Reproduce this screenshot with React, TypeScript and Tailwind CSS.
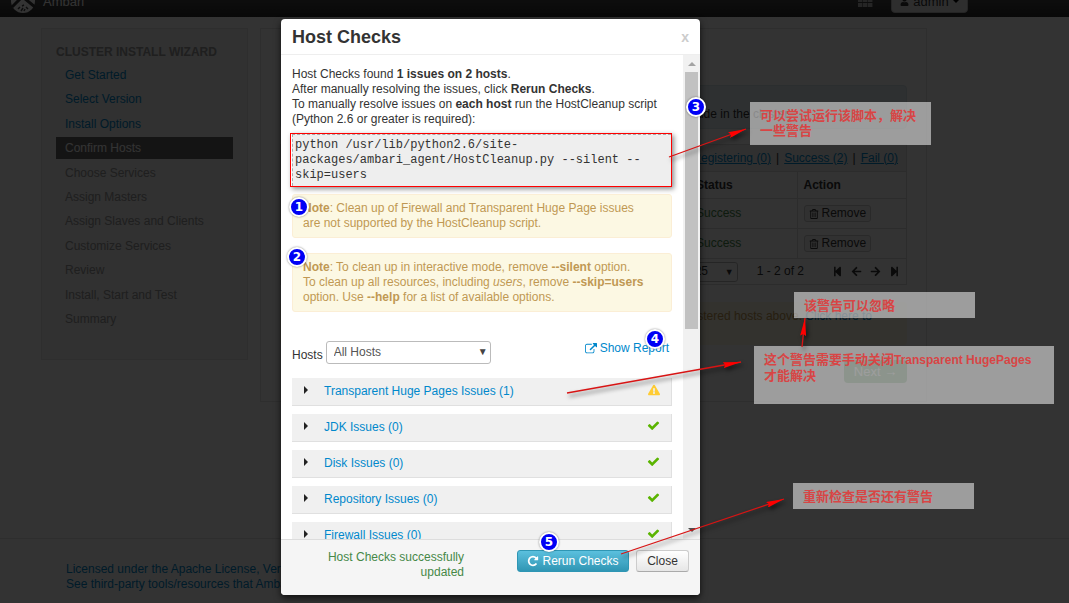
import React from "react";
import { FaArrowLeft, FaArrowRight, FaExclamationTriangle, FaRegTrashAlt, FaStepBackward, FaStepForward, FaUser } from "react-icons/fa";

const PATHS = {
  external:
    "M1408 928v320q0 119-84.5 203.5t-203.5 84.5h-832q-119 0-203.5-84.5t-84.5-203.5v-832q0-119 84.5-203.5t203.5-84.5h704q14 0 23 9t9 23v64q0 14-9 23t-23 9h-704q-66 0-113 47t-47 113v832q0 66 47 113t113 47h832q66 0 113-47t47-113v-320q0-14 9-23t23-9h64q14 0 23 9t9 23zm384-864v512q0 26-19 45t-45 19-45-19l-176-176-652 652q-10 10-23 10t-23-10l-114-114q-10-10-10-23t10-23l652-652-176-176q-19-19-19-45t19-45 45-19h512q26 0 45 19t19 45z",
  repeat:
    "M1664 256v448q0 26-19 45t-45 19h-448q-42 0-59-40-17-39 14-69l138-138q-148-137-349-137-104 0-198.5 40.5t-163.5 109.5-109.5 163.5-40.5 198.5 40.5 198.5 109.5 163.5 163.5 109.5 198.5 40.5q119 0 225-52t179-147q7-10 23-12 15 0 25 9l137 138q9 8 9.5 20.5t-7.5 22.5q-109 132-264 204.5t-327 72.5q-156 0-298-61t-245-164-164-245-61-298 61-298 164-245 245-164 298-61q147 0 284.5 55.5t244.5 156.5l130-129q29-31 70-14 39 17 39 59z",
  check:
    "M1671 566q0 40-28 68l-724 724-136 136q-28 28-68 28t-68-28l-136-136-362-362q-28-28-28-68t28-68l136-136q28-28 68-28t68 28l294 295 656-657q28-28 68-28t68 28l136 136q28 28 28 68z",
};

function Glyph({ name, className }: { name: keyof typeof PATHS; className: string }) {
  return (
    <svg viewBox="0 0 1792 1792" fill="currentColor" className={className} aria-hidden="true">
      <path d={PATHS[name]} />
    </svg>
  );
}

const steps = [
  { label: "Get Started", state: "done" },
  { label: "Select Version", state: "done" },
  { label: "Install Options", state: "done" },
  { label: "Confirm Hosts", state: "active" },
  { label: "Choose Services", state: "todo" },
  { label: "Assign Masters", state: "todo" },
  { label: "Assign Slaves and Clients", state: "todo" },
  { label: "Customize Services", state: "todo" },
  { label: "Review", state: "todo" },
  { label: "Install, Start and Test", state: "todo" },
  { label: "Summary", state: "todo" },
];

const stepStyle: Record<string, string> = {
  done: "text-[#0088cc]",
  active: "bg-[#666] text-white",
  todo: "text-[#999]",
};

function Navbar() {
  return (
    <header className="flex h-[17px] items-end overflow-hidden bg-linear-to-b from-[#444] to-[#2c2c2c] pr-[101px] pl-[11px] text-white">
      <svg viewBox="0 0 24 24" className="mb-1 size-6 shrink-0" aria-hidden="true">
        <circle cx="12" cy="12" r="12" fill="#fff" />
        <path d="M1 18 L10 9 L13 9 L24 18" fill="none" stroke="#333" strokeWidth="3" />
        <path d="M7 20 L9 18 M10 22 L12 19 M13 22 L14 20 M17 20 L15 18 M11 17 L13 16" fill="none" stroke="#444" strokeWidth="1.5" />
      </svg>
      <span className="mb-2 ml-2 text-[13px] leading-[15px] text-white">Ambari</span>
      <svg viewBox="0 0 15 14" className="mb-[10px] ml-auto h-[14px] w-[15px] fill-[#bbb]" aria-hidden="true">
        {[0, 5, 10].map((y) => [0, 5, 10].map((x) => <rect key={`${x}-${y}`} x={x} y={y} width="4.4" height="4" />))}
      </svg>
      <button className="mb-1 ml-[18px] flex h-6 w-[77px] items-center justify-center gap-1 rounded-[4px] border border-[#bbb] bg-[#e6e6e6] text-[13px] leading-[15px] text-[#333]">
        <FaUser className="size-[9px]" />
        admin
        <span className="border-x-[3px] border-t-[3px] border-x-transparent border-t-black" />
      </button>
    </header>
  );
}

function Sidebar() {
  return (
    <nav className="h-[332px] w-[207px] shrink-0 border border-[#e3e3e3] bg-[#f2f2f2] px-[14px] pt-4">
      <h3 className="leading-[15px] font-bold text-[#999]">CLUSTER INSTALL WIZARD</h3>
      <ul className="mt-1 flex h-[266px] flex-col justify-between">
        {steps.map((s) => (
          <li key={s.label} className={`h-[22px] pl-[9px] leading-[22px] ${stepStyle[s.state]}`}>
            {s.state === "done" ? <a href="#step">{s.label}</a> : s.label}
          </li>
        ))}
      </ul>
    </nav>
  );
}

function HostRow() {
  return (
    <tr className="h-[30px] border-b border-[#ddd]">
      <td className="w-full" />
      <td className="min-w-[107px] pl-[6px] text-[#468847]">Success</td>
      <td className="min-w-[109px] border-l border-[#ddd] pl-[6px]">
        <button className="flex h-[17px] items-center gap-[3px] rounded-[3px] border border-[#ccc] bg-[#f5f5f5] px-1">
          <FaRegTrashAlt className="size-[10px]" />
          Remove
        </button>
      </td>
    </tr>
  );
}

function ConfirmHosts() {
  return (
    <main className="h-[374px] min-w-0 flex-1 border border-[#e3e3e3] bg-[#fcfcfc] px-[19px] pt-14">
      <div className="flex h-[44px] items-center justify-end rounded-[4px] border border-[#d5e3ea] bg-[#e6eef4] pt-[14px] pr-[115px] text-[#333]">
        include in the cluster.
      </div>
      <div className="mt-[15px] border border-[#ddd]">
        <div className="flex h-[26px] items-center justify-end gap-[5px] bg-[#eee] pr-[8px]">
          <a href="#registering" className="text-[#0088cc] underline">Registering (0)</a>|
          <a href="#success" className="text-[#0088cc] underline">Success (2)</a>|
          <a href="#fail" className="text-[#0088cc] underline">Fail (0)</a>
        </div>
        <table className="w-full border-collapse text-left">
          <thead>
            <tr className="h-[27px] border-y border-[#ddd]">
              <th className="w-full" />
              <th className="min-w-[107px] pl-[6px]">Status</th>
              <th className="min-w-[109px] border-l border-[#ddd] pl-[6px]">Action</th>
            </tr>
          </thead>
          <tbody>
            <HostRow />
            <HostRow />
          </tbody>
        </table>
        <div className="flex h-[25px] items-center justify-end pr-[6px]">
          <div className="relative">
            <select aria-label="Rows per page" className="h-5 w-[60px] appearance-none rounded-[3px] border border-[#bbb] bg-white pl-[16px]">
              <option>25</option>
            </select>
            <span className="pointer-events-none absolute top-1 right-1 text-[9px] leading-3">▼</span>
          </div>
          <span className="ml-[19px]">1 - 2 of 2</span>
          <div className="ml-[28px] flex gap-2 text-[#333]">
            <FaStepBackward className="size-[11px]" />
            <FaArrowLeft className="size-[11px]" />
            <FaArrowRight className="size-[11px]" />
            <FaStepForward className="size-[11px]" />
          </div>
        </div>
      </div>
      <div className="mt-[17px] h-[43px] rounded-[4px] bg-[#fcf8e3] pt-[7px] pr-[35px] text-right text-[#c09853]">
        registered hosts above. <a href="#warnings" className="text-[#0088cc]">Click here to</a>
      </div>
      <button className="mt-[15px] ml-auto block h-[23px] w-[63px] rounded-[4px] bg-[#51a351] text-[13px] leading-5 text-white">Next →</button>
    </main>
  );
}

const checks = [
  { label: "Transparent Huge Pages Issues (1)", ok: false },
  { label: "JDK Issues (0)", ok: true },
  { label: "Disk Issues (0)", ok: true },
  { label: "Repository Issues (0)", ok: true },
  { label: "Firewall Issues (0)", ok: true },
];

function Note({ children }: { children: React.ReactNode }) {
  return <div className="rounded-[3px] border border-[#fbeed5] bg-[#fcf8e3] px-[10px] py-[6px] whitespace-nowrap text-[#c09853]">{children}</div>;
}

function HostChecks() {
  return (
    <section
      role="dialog"
      aria-labelledby="host-checks-title"
      className="absolute top-[19px] left-[281px] flex h-[576px] w-[419px] flex-col overflow-hidden rounded-[4px] bg-white shadow-[0_3px_7px_rgba(0,0,0,0.7)]"
    >
      <header className="flex h-9 shrink-0 items-center justify-between border-b border-[#eee] pr-[11px] pl-[11px]">
        <h1 id="host-checks-title" className="text-[18px] leading-6 font-bold">Host Checks</h1>
        <button aria-label="Close dialog" className="text-[14px] leading-4 font-bold text-[#ccc]">x</button>
      </header>

      <div className="flex min-h-0 flex-1">
        <div className="min-w-0 flex-1 overflow-hidden px-[11px] pt-3">
          <p className="whitespace-nowrap">
            Host Checks found <b>1 issues on 2 hosts</b>.
            <br />
            After manually resolving the issues, click <b>Rerun Checks</b>.
            <br />
            To manually resolve issues on <b>each host</b> run the HostCleanup script
            <br />
            (Python 2.6 or greater is required):
          </p>
          <div className="mt-[6px] -ml-[2px] border border-[#f00] shadow-[2px_2px_5px_rgba(0,0,0,0.45)]">
            <pre className="ml-px h-[52px] border-t border-l border-dashed border-[#aaa] bg-[#eee] pt-[3px] pl-[2px] font-['Liberation_Mono',monospace] text-[12px] leading-[15px]">
              {"python /usr/lib/python2.6/site-\npackages/ambari_agent/HostCleanup.py --silent --\nskip=users"}
            </pre>
          </div>
          <div className="mt-[7px] flex flex-col gap-[15px]">
            <Note>
              <b>Note</b>: Clean up of Firewall and Transparent Huge Page issues
              <br />
              are not supported by the HostCleanup script.
            </Note>
            <Note>
              <b>Note</b>: To clean up in interactive mode, remove <b>--silent</b> option.
              <br />
              To clean up all resources, including <i>users</i>, remove <b>--skip=users</b>
              <br />
              option. Use <b>--help</b> for a list of available options.
            </Note>
          </div>
          <div className="mt-[29px] flex h-[23px] items-center">
            <label htmlFor="hosts" className="pt-[5px]">Hosts</label>
            <div className="relative ml-[3px]">
              <select id="hosts" className="h-[23px] w-[165px] appearance-none rounded-[3px] border border-[#bbb] bg-white pl-[7px] text-[#555]">
                <option>All Hosts</option>
              </select>
              <span className="pointer-events-none absolute top-[5px] right-[3px] text-[10px] leading-3 text-[#444]">▼</span>
            </div>
            <a href="#report" className="mr-[3px] mb-2 ml-auto flex items-center gap-[3px] text-[#0088cc]">
              <Glyph name="external" className="size-3" />
              Show Report
            </a>
          </div>
          <ul className="mt-[14px] flex flex-col gap-2">
            {checks.map((c) => (
              <li key={c.label} className="flex h-7 shrink-0 items-center border-r border-b border-[#e0e0e0] bg-[#f0f0f0] pr-[11px] pl-3">
                <span className="mb-1 border-y-[4px] border-l-[4px] border-y-transparent border-l-[#222]" />
                <a href="#check" className="ml-4 text-[#0088cc]">{c.label}</a>
                {c.ok ? (
                  <Glyph name="check" className="mb-1 ml-auto size-[13px] text-[#5ab400]" />
                ) : (
                  <FaExclamationTriangle className="mb-1 ml-auto size-3 text-[#fc3]" />
                )}
              </li>
            ))}
          </ul>
        </div>
        <div className="flex w-[17px] shrink-0 flex-col items-center justify-between bg-[#f1f1f1] py-[7px]" aria-hidden="true">
          <span className="border-x-4 border-b-4 border-x-transparent border-b-[#a3a3a3]" />
          <span className="mt-[6px] mb-auto h-[257px] w-[13px] bg-[#c1c1c1]" />
          <span className="border-x-4 border-t-4 border-x-transparent border-t-[#505050]" />
        </div>
      </div>

      <footer className="flex h-14 shrink-0 items-start border-t border-[#ddd] bg-[#f5f5f5] pt-[10px] pr-[11px]">
        <p className="w-[183px] pl-10 text-right text-[#468847]">Host Checks successfully updated</p>
        <button className="ml-auto flex h-[22px] w-[112px] items-center justify-center gap-[3px] rounded-[3px] border border-[#2f96b4] bg-linear-to-b from-[#5bc0de] to-[#2f96b4] whitespace-nowrap text-white">
          <Glyph name="repeat" className="size-3" />
          Rerun Checks
        </button>
        <button className="ml-[7px] h-[22px] w-[53px] rounded-[3px] border border-[#ccc] border-b-[#aaa] bg-linear-to-b from-white to-[#e6e6e6]">Close</button>
      </footer>
    </section>
  );
}

function Callout({ className, children }: { className: string; children: React.ReactNode }) {
  return (
    <div className={`absolute bg-white/[0.52] px-[10px] pt-[6px] text-[13px] leading-[15px] font-bold whitespace-nowrap text-[#d84545] ${className}`}>
      {children}
    </div>
  );
}

function Pin({ className, children }: { className: string; children: React.ReactNode }) {
  return (
    <span
      className={`absolute flex size-5 items-center justify-center rounded-full border-2 border-white bg-[#0000f5] font-['DejaVu_Sans',sans-serif] text-[12px] leading-none font-bold text-white shadow-[0_0_2px_rgba(0,0,0,0.5)] ${className}`}
    >
      {children}
    </span>
  );
}

const arrows = [
  { from: [669, 157], to: [746, 129] },
  { from: [567, 393], to: [741, 362] },
  { from: [802, 347], to: [805, 318] },
  { from: [621, 554], to: [784, 499] },
];

function Arrows() {
  return (
    <svg width="1069" height="603" className="pointer-events-none absolute top-0 left-0 drop-shadow-[2px_3px_2px_rgba(0,0,0,0.6)]" aria-hidden="true">
      <defs>
        <marker id="head" viewBox="0 0 18 6" refX="18" refY="3" markerWidth="18" markerHeight="6" markerUnits="userSpaceOnUse" orient="auto">
          <path d="M0 0 L18 3 L0 6 L2 3 Z" fill="#f00" />
        </marker>
      </defs>
      {arrows.map((a) => (
        <line key={a.from[0]} x1={a.from[0]} y1={a.from[1]} x2={a.to[0]} y2={a.to[1]} stroke="#d81414" strokeWidth="1.3" markerEnd="url(#head)" />
      ))}
    </svg>
  );
}

export default function App() {
  return (
    <div className="relative min-h-screen overflow-hidden bg-white font-['Liberation_Sans','Noto_Sans_CJK_SC',sans-serif] text-[12px] leading-[15px] text-[#333]">
      <Navbar />
      <div className="ml-[41px] flex max-w-[886px] items-start gap-3 pt-[11px]">
        <Sidebar />
        <ConfirmHosts />
      </div>
      <footer className="mt-[136px] border-t border-[#e5e5e5] pt-[23px] pl-[66px] text-[#0088cc]">
        <a href="#license" className="block">Licensed under the Apache License, Version 2.0.</a>
        <a href="#notices" className="block">See third-party tools/resources that Ambari uses and their respective authors</a>
      </footer>
      <div className="absolute inset-0 bg-black/80" />
      <HostChecks />

      <Callout className="top-[102px] left-[750px] h-[43px] w-[181px]">
        可以尝试运行该脚本，解决
        <br />
        一些警告
      </Callout>
      <Callout className="top-[292px] left-[794px] h-[26px] w-[181px]">该警告可以忽略</Callout>
      <Callout className="top-[346px] left-[754px] h-[58px] w-[300px]">
        这个警告需要手动关闭<span className="text-[12px]">Transparent HugePages</span>
        <br />
        才能解决
      </Callout>
      <Callout className="top-[483px] left-[793px] h-[26px] w-[181px]">重新检查是否还有警告</Callout>
      <Arrows />
      <Pin className="top-[197px] left-[289px]">1</Pin>
      <Pin className="top-[247px] left-[287px]">2</Pin>
      <Pin className="top-[97px] left-[686px]">3</Pin>
      <Pin className="top-[329px] left-[645px]">4</Pin>
      <Pin className="top-[532px] left-[539px]">5</Pin>
    </div>
  );
}
